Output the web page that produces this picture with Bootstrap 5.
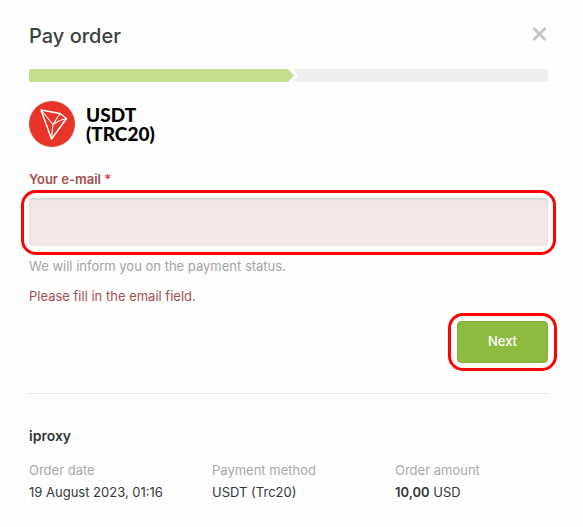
<!DOCTYPE html>
<html lang="en">
<head>
<meta charset="utf-8">
<meta name="viewport" content="width=device-width, initial-scale=1">
<title>Pay order</title>
<link href="https://cdn.jsdelivr.net/npm/bootstrap@5.3.0/dist/css/bootstrap.min.css" rel="stylesheet">
<style>
body { font-family: Inter, "Open Sans", sans-serif; font-size: 13px; line-height: 20px; color: #333638; background: #fefefe; }
.pay-panel { padding: 20px 35px 24px 29px; }
.pay-title { font-size: 20px; line-height: 32px; font-weight: 500; color: #3c3e40; }
.pay-close { line-height: 0; margin-top: 6px; }
.steps { height: 13px; background: #eee; border-radius: 3px; margin-top: 17px; }
.steps-done { height: 13px; color: #c3df8e; }
.steps-fill { background: currentColor; border-radius: 2px 0 0 2px; }
.coin-name { font-family: Lato, sans-serif; font-size: 19px; line-height: 19px; font-weight: 900; color: #000; }
.coin { gap: 11px; margin-top: 19px; }
.email-label { font-size: 13px; line-height: 20px; font-weight: 600; color: #a35050; margin-top: 22px; }
.email-label span { color: #e03c31; }
.marker { border: 3px solid #f00; border-radius: 15px; }
.marker-field { padding: 5px 5px 6px; margin: 1px -8px 0; }
.marker-button { padding: 5px 6px; margin-right: -9px; }
.email-input { height: 48px; background: #f3e8e7; border: 0; border-radius: 4px; box-shadow: inset 0 2px 1px #dcd6d6, inset 1px 0 0 #e8e0e0, inset -1px 0 0 #e8e0e0; }
.email-input:focus { background: #f3e8e7; }
.hint { color: #a3a3a3; margin-top: 1px; }
.error-text { color: #a35050; margin-top: 10px; margin-bottom: 7px; }
.btn-next { width: 91px; height: 42px; padding: 0; font-size: 13px; font-weight: 500; color: #fff; background: #8cbb40; border: 1px solid #80ae38; border-radius: 4px; }
.btn-next:hover { color: #fff; background: #80ae38; }
.divider { border-top: 1px solid #e6e6e6; margin-top: 22px; }
.merchant { font-size: 14px; line-height: 20px; font-weight: 600; margin-top: 32px; margin-bottom: 14px; }
.details { --bs-gutter-x: 30px; }
.details dt { font-weight: 400; color: #a8a8a8; line-height: 20px; }
.details dd { margin: 2px 0 0; }
.details strong { font-weight: 600; }
</style>
</head>
<body>
<main class="pay-panel">
  <header class="d-flex justify-content-between align-items-start">
    <h1 class="pay-title mb-0">Pay order</h1>
    <button type="button" class="pay-close btn p-0 border-0" aria-label="Close">
      <svg width="17" height="16" viewBox="0 0 17 16" fill="none" stroke="#c6c6c6" stroke-width="3"><path d="M2.5 2 14.5 14M14.5 2 2.5 14"/></svg>
    </button>
  </header>
  <div class="steps">
    <div class="steps-done d-flex w-50" role="progressbar" aria-label="Payment progress" aria-valuenow="50" aria-valuemin="0" aria-valuemax="100">
      <div class="steps-fill flex-grow-1"></div>
      <svg class="flex-shrink-0 overflow-visible" width="1" height="13" viewBox="0 0 1 13"><path d="M0 0H5L10 6.500 5 13H0Z" fill="#fff"/><path d="M-1 0H0L6 6.500 0 13H-1Z" fill="currentColor"/></svg>
    </div>
  </div>
  <div class="coin d-flex align-items-center">
    <svg class="flex-shrink-0" width="46" height="46" viewBox="0 0 46 46" fill="none" stroke="#fff" stroke-linejoin="round"><circle cx="23" cy="23" r="23" fill="#e93529" stroke="none"/><path d="M12 9 31 12.500 37.500 17.500 22.500 38Z" stroke-width="1.500"/><path d="M12 9 24 23.500 22.500 38M24 23.500 31 19.500 37.500 17.500M24 23.500 31 12.500" stroke-width="1.100"/></svg>
    <div class="coin-name">USDT<br>(TRC20)</div>
  </div>
  <form novalidate>
    <label for="email" class="email-label d-block">Your e-mail <span>*</span></label>
    <div class="marker marker-field">
      <input type="email" id="email" class="form-control email-input" aria-describedby="hint error" required>
    </div>
    <p id="hint" class="hint mb-0">We will inform you on the payment status.</p>
    <p id="error" class="error-text">Please fill in the email field.</p>
    <div class="d-flex justify-content-end">
      <div class="marker marker-button"><button type="submit" class="btn btn-next d-block">Next</button></div>
    </div>
  </form>
  <section class="divider">
    <h2 class="merchant">iproxy</h2>
    <dl class="details row mb-0">
      <div class="col-4"><dt>Order date</dt><dd>19 August 2023, 01:16</dd></div>
      <div class="col-4"><dt>Payment method</dt><dd>USDT (Trc20)</dd></div>
      <div class="col-4"><dt>Order amount</dt><dd><strong>10,00</strong> USD</dd></div>
    </dl>
  </section>
</main>
<script src="https://cdn.jsdelivr.net/npm/bootstrap@5.3.0/dist/js/bootstrap.bundle.min.js"></script>
</body>
</html>
